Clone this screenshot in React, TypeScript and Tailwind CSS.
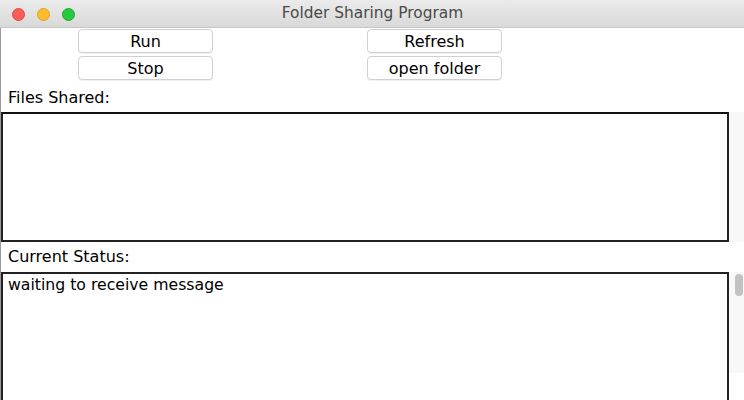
const font = { fontFamily: '"DejaVu Sans", "Liberation Sans", sans-serif' };

const Button = ({ label }: { label: string }) => (
  <button className="w-[135px] h-[24px] rounded-[4px] border border-[#d0d0d0] bg-white pt-[1px] text-[16px] leading-none text-black shadow-[0_1px_0_rgba(0,0,0,0.05)]">
    {label}
  </button>
);

export default function App() {
  return (
    <div className="w-[744px] h-[400px] overflow-hidden bg-white" style={font}>
      {/* title bar */}
      <div className="relative h-[28px] bg-gradient-to-b from-[#ebebeb] to-[#d9d9d9] border-b border-[#c6c6c6] flex items-center justify-center">
        <div className="absolute left-[12px] top-[8px] flex gap-[12px]">
          <span className="w-[13px] h-[13px] rounded-full bg-[#fc5f57] border border-[#e2463f]" />
          <span className="w-[13px] h-[13px] rounded-full bg-[#fdbc2e] border border-[#dfa023]" />
          <span className="w-[13px] h-[13px] rounded-full bg-[#28c840] border border-[#1aab29]" />
        </div>
        <span className="text-[15.4px] text-[#4a4a4a] ml-[1px]">Folder Sharing Program</span>
      </div>

      <div className="border-l border-[#9a9a9a] h-[372px] flex flex-col">
        {/* buttons */}
        <div className="flex pl-[77px] gap-[154px] pt-[1px]">
          <div className="flex flex-col gap-[3px]">
            <Button label="Run" />
            <Button label="Stop" />
          </div>
          <div className="flex flex-col gap-[3px]">
            <Button label="Refresh" />
            <Button label="open folder" />
          </div>
        </div>

        <div className="pl-[7px] pt-[6px] h-[32px] text-[16px] text-black">Files Shared:</div>
        <div className="flex">
          <div className="w-[728px] h-[130px] border-2 border-[#222] border-t-[#111]" />
          <div className="w-[15px] h-[130px] bg-[#f8f8f8]" />
        </div>

        <div className="pl-[7px] pt-[3px] h-[30px] text-[16px] text-black">Current Status:</div>
        <div className="flex flex-1">
          <div className="w-[728px] border-2 border-b-0 border-[#222] pl-[5px] text-[15.7px] leading-[22px] text-black">
            waiting to receive message
          </div>
          <div className="w-[15px] h-[101px] bg-[#f8f8f8] pl-[6px] pt-[2px]">
            <div className="w-[8px] h-[22px] rounded-full bg-[#c2c2c2]" />
          </div>
        </div>
      </div>
    </div>
  );
}
